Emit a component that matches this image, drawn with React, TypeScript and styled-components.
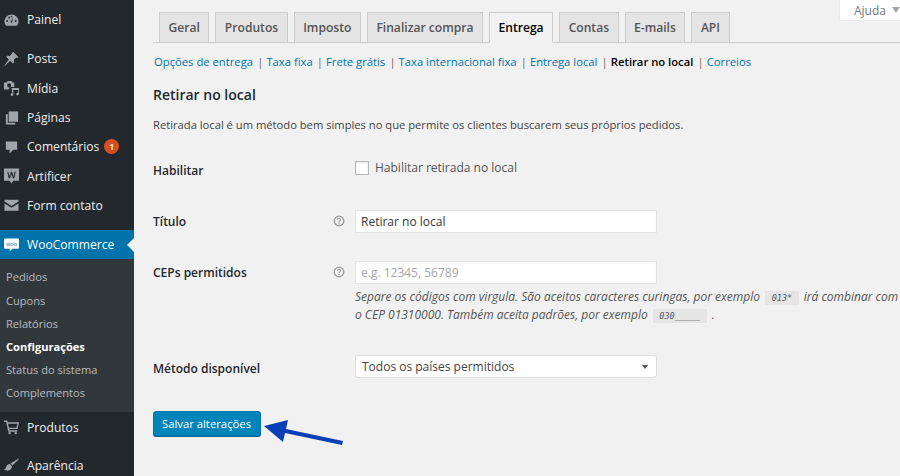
import styled, { createGlobalStyle } from "styled-components";

const GlobalStyle = createGlobalStyle`
  html, body {
    margin: 0;
    padding: 0;
    height: 100%;
    overflow: hidden;
    background: #f1f1f1;
  }
  * { box-sizing: border-box; }
`;

const Page = styled.div`
  display: flex;
  position: relative;
  width: 900px;
  height: 476px;
  overflow: hidden;
  background: #f1f1f1;
  font-family: "Open Sans", sans-serif;
  font-size: 12px;
  color: #444;
`;

/* sidebar */
const Sidebar = styled.nav`
  flex: 0 0 134px;
  height: 476px;
  padding-top: 5px;
  background: #23282d;
  overflow: hidden;
`;

const MenuItem = styled.div<{ $gap?: number; $active?: boolean }>`
  display: flex;
  align-items: center;
  position: relative;
  height: 29.3px;
  margin-top: ${(p) => p.$gap ?? 0}px;
  padding-left: 4px;
  gap: 4px;
  font-size: 12.1px;
  color: ${(p) => (p.$active ? "#fff" : "#eee")};
  background: ${(p) => (p.$active ? "#0073aa" : "transparent")};
`;

const IconBox = styled.span`
  display: flex;
  align-items: center;
  justify-content: center;
  width: 15px;
  height: 16px;
  margin-right: 4px;
`;

const Badge = styled.span`
  display: inline-flex;
  align-items: center;
  justify-content: center;
  width: 15px;
  height: 15px;
  margin-left: 1px;
  border-radius: 50%;
  background: #d54e21;
  color: #fff;
  font-size: 9px;
  font-weight: 600;
`;

const ActiveNotch = styled.span`
  position: absolute;
  right: 0;
  top: 8px;
  border: 7px solid transparent;
  border-left-width: 0;
  border-right-color: #f1f1f1;
`;

const Submenu = styled.div`
  display: flex;
  flex-direction: column;
  height: 153px;
  padding: 6px 0 8px 6px;
  background: #32373c;
`;

const SubItem = styled.div<{ $current?: boolean }>`
  flex: 1;
  display: flex;
  align-items: center;
  font-size: 11.1px;
  font-weight: ${(p) => (p.$current ? 700 : 400)};
  color: ${(p) => (p.$current ? "#fff" : "rgba(240,245,250,.7)")};
`;

/* main column */
const Main = styled.main`
  flex: 1;
  min-width: 0;
  padding: 12px 0 0 19px;
`;

const HelpTab = styled.div`
  position: absolute;
  top: 0;
  right: 0;
  display: flex;
  align-items: center;
  gap: 6px;
  width: 60px;
  height: 20px;
  padding-left: 14px;
  background: #fff;
  color: #72777c;
  font-size: 12px;
  box-shadow: 0 0 1px rgba(0, 0, 0, 0.15);
`;

const HelpCaret = styled.span`
  border: 4px solid transparent;
  border-top: 6px solid #a0a5aa;
  border-bottom-width: 0;
`;

const Tabs = styled.div`
  display: flex;
  gap: 6px;
  height: 31px;
  padding-left: 6px;
  border-bottom: 1px solid #ccc;
`;

const Tab = styled.div<{ $active?: boolean }>`
  height: ${(p) => (p.$active ? "31px" : "30px")};
  padding: 0 8.5px;
  border: 1px solid #ccc;
  border-bottom: ${(p) => (p.$active ? "1px solid #f1f1f1" : "none")};
  background: ${(p) => (p.$active ? "#f1f1f1" : "#e4e4e4")};
  color: ${(p) => (p.$active ? "#000" : "#555")};
  font-size: 12.1px;
  font-weight: 600;
  line-height: 29px;
  white-space: nowrap;
`;

const SubNav = styled.div`
  display: flex;
  height: 18px;
  margin-top: 10px;
  padding-left: 1px;
  font-size: 11.25px;
  line-height: 18px;
  white-space: nowrap;
  color: #666;
`;

const SubLink = styled.span<{ $current?: boolean }>`
  color: ${(p) => (p.$current ? "#000" : "#0073aa")};
  font-weight: ${(p) => (p.$current ? 600 : 400)};
`;

const Pipe = styled.span`
  margin: 0 3px 0 4.2px;
`;

const Title = styled.h3`
  margin: 14px 0 0;
  font-size: 14px;
  font-weight: 600;
  line-height: 20px;
  color: #23282d;
`;

const Intro = styled.p`
  margin: 11px 0 0;
  font-size: 11.2px;
  line-height: 18px;
  color: #444;
`;

const FormRow = styled.div<{ $height: number; $top?: number }>`
  display: grid;
  grid-template-columns: 178px 24px 1fr;
  height: ${(p) => p.$height}px;
  margin-top: ${(p) => p.$top ?? 0}px;
`;

const Label = styled.label<{ $drop?: number }>`
  padding-top: ${(p) => p.$drop ?? 0}px;
  font-size: 12px;
  font-weight: 600;
  line-height: 24px;
  color: #23282d;
`;

const HelpIcon = styled.span`
  display: flex;
  height: 21px;
  align-items: center;
  padding-left: 2px;
`;

const CheckRow = styled.div`
  display: flex;
  align-items: center;
  height: 23px;
  gap: 6px;
  font-size: 12px;
  color: #555;
`;

const Check = styled.input`
  appearance: none;
  width: 14px;
  height: 14px;
  margin: 0;
  border: 1px solid #b4b9be;
  background: #fff;
  box-shadow: inset 0 1px 2px rgba(0, 0, 0, 0.1);
`;

const TextInput = styled.input`
  display: block;
  width: 302px;
  height: 23px;
  padding: 0 5px;
  border: 1px solid #e4e4e4;
  background: #fff;
  font-family: inherit;
  font-size: 12px;
  color: #32373c;
  box-shadow: inset 0 1px 2px rgba(0, 0, 0, 0.03);
  &::placeholder { color: #a5a5a5; }
`;

const Description = styled.p`
  width: 545px;
  margin: 4px 0 0;
  font-size: 12px;
  font-style: italic;
  line-height: 17.5px;
  color: #555;
`;

const Code = styled.code`
  margin: 0 2px;
  padding: 2px 6.5px;
  background: #e5e5e5;
  font-family: "DejaVu Sans Mono", monospace;
  font-size: 8.5px;
  font-style: italic;
  line-height: 1;
  color: #555;
`;

const SelectBox = styled.div`
  position: relative;
  width: 302px;
  height: 23px;
  padding-left: 6px;
  border: 1px solid #ddd;
  border-radius: 3px;
  background: #fff;
  font-size: 12px;
  line-height: 22px;
  color: #444;
  &::after {
    content: "";
    position: absolute;
    right: 8px;
    top: 9px;
    border: 3px solid transparent;
    border-top: 4px solid #555;
    border-bottom-width: 0;
  }
`;

const SaveButton = styled.button`
  display: block;
  width: 108px;
  height: 25px;
  margin-top: 33px;
  padding: 0 1px 1px 0;
  border: 1px solid #0073aa;
  border-radius: 3px;
  background: #0085ba;
  box-shadow: 0 1px 0 #006799;
  color: #fff;
  font-family: inherit;
  font-size: 11.3px;
`;

const Arrow = styled.svg`
  position: absolute;
  left: 262px;
  top: 415px;
`;

const Icon = ({ children }: { children: React.ReactNode }) => (
  <IconBox>
    <svg width="16" height="16" viewBox="0 0 16 16" fill="#a0a5aa">
      {children}
    </svg>
  </IconBox>
);

function Question() {
  return (
    <svg width="12" height="12" viewBox="0 0 12 12" fill="none">
      <circle cx="6" cy="6" r="4.8" stroke="#999" strokeWidth="1.3" />
      <path d="M4.4 4.8c0-2 3.2-2 3.2-.1 0 1.2-1.600 1.100-1.600 2.500" stroke="#999" strokeWidth="1.100" />
      <rect x="5.400" y="8" width="1.200" height="1.200" fill="#999" />
    </svg>
  );
}

export default function App() {
  return (
    <Page>
      <GlobalStyle />
      <Sidebar>
        <MenuItem>
          <Icon>
            <path d="M8 2a7.500 7.500 0 0 0-7.500 7.500c0 2 .8 3.500 2 4.500h11c1.200-1 2-2.500 2-4.500A7.500 7.500 0 0 0 8 2z" />
            <path d="M9.500 5 7 10.500l1.600.6z" fill="#23282d" />
            <circle cx="3.500" cy="9" r="1" fill="#23282d" />
            <circle cx="12.500" cy="9" r="1" fill="#23282d" />
            <circle cx="5.500" cy="5.500" r="1" fill="#23282d" />
            <circle cx="8" cy="4.200" r=".8" fill="#23282d" />
          </Icon>
          Painel
        </MenuItem>
        <MenuItem $gap={10}>
          <Icon>
            <path d="M10 0.500 15.500 6l-1.500.8-1-.5-2.500 2.500.3 2.700-1.300 1.200L6.600 9.800 1 15.500l-.5-.3 4.700-6.600L2.300 5.700l1.200-1.300 2.700.3 2.500-2.500-.4-1z" />
          </Icon>
          Posts
        </MenuItem>
        <MenuItem>
          <Icon>
            <path d="M0 2h3l1-1.500h4L9 2h2v5H8.500a3 3 0 0 0-3.500 2.500H0zM5.500 3a2.200 2.200 0 1 0 0 4.400 2.200 2.200 0 0 0 0-4.400z" />
            <path d="M8 8h8v6.500a1.500 1.500 0 1 1-1.500-1.500l.5.100V10h-5v5a1.500 1.500 0 1 1-1.500-1.500l.5.100z" />
          </Icon>
          Mídia
        </MenuItem>
        <MenuItem>
          <Icon>
            <path d="M5 1h10v11H5z" />
            <path d="M2 4h2v9h8v2H2z" />
          </Icon>
          Páginas
        </MenuItem>
        <MenuItem>
          <Icon>
            <path d="M2 2h12v9h-4l-4 4v-4H2z" />
          </Icon>
          Comentários
          <Badge>1</Badge>
        </MenuItem>
        <MenuItem>
          <Icon>
            <path d="M0 0h16v13h-6l-2 3-2-3H0z" />
            <path d="m3.500 3.500 1.200 0 1.100 5L7.300 3.500h1.400l1.500 5 1.100-5 1.200 0L11 10.500H9.500L8 5.800 6.500 10.500H5z" fill="#23282d" />
          </Icon>
          Artificer
        </MenuItem>
        <MenuItem>
          <Icon>
            <path d="M0.500 2.500h15v1.800L8 9 .5 4.300z" />
            <path d="M.5 6.300 8 11l7.500-4.700V14H.5z" />
          </Icon>
          Form contato
        </MenuItem>
        <MenuItem $gap={10} $active>
          <IconBox>
            <svg width="16" height="16" viewBox="0 0 16 16">
              <path d="M1 1h14a1 1 0 0 1 1 1v9a1 1 0 0 1-1 1h-6l-3 3v-3H1a1 1 0 0 1-1-1V2a1 1 0 0 1 1-1z" fill="#fff" />
              <text x="8" y="9" fontSize="6" fontFamily="Open Sans, sans-serif" fill="#0073aa" textAnchor="middle">
                woo
              </text>
            </svg>
          </IconBox>
          WooCommerce
          <ActiveNotch />
        </MenuItem>
        <Submenu>
          <SubItem>Pedidos</SubItem>
          <SubItem>Cupons</SubItem>
          <SubItem>Relatórios</SubItem>
          <SubItem $current>Configurações</SubItem>
          <SubItem>Status do sistema</SubItem>
          <SubItem>Complementos</SubItem>
        </Submenu>
        <MenuItem>
          <Icon>
            <path d="M0 1h3.500l.5 2H16l-1.500 7H5.500l.3 1.500H14V13H4.500L2.300 2.600H0zM4.300 4.500 5.200 8.800h8.100l.9-4.300z" />
            <circle cx="6" cy="14.500" r="1.300" />
            <circle cx="12.500" cy="14.500" r="1.300" />
          </Icon>
          Produtos
        </MenuItem>
        <MenuItem $gap={9}>
          <Icon>
            <path d="M15.500 1 16 1.500 9 8.500 7 6.500z" />
            <path d="M6.200 7 8.500 9.400c0 2.500-2 4.600-4.500 4.600-1.500 0-2.800-.4-4-1.500 1.500 0 2-.8 2.200-2C2.500 8.500 4 7 6.200 7z" />
          </Icon>
          Aparência
        </MenuItem>
      </Sidebar>

      <Main>
        <Tabs>
          <Tab>Geral</Tab>
          <Tab>Produtos</Tab>
          <Tab>Imposto</Tab>
          <Tab>Finalizar compra</Tab>
          <Tab $active>Entrega</Tab>
          <Tab>Contas</Tab>
          <Tab>E-mails</Tab>
          <Tab>API</Tab>
        </Tabs>
        <SubNav>
          <SubLink>Opções de entrega</SubLink>
          <Pipe>|</Pipe>
          <SubLink>Taxa fixa</SubLink>
          <Pipe>|</Pipe>
          <SubLink>Frete grátis</SubLink>
          <Pipe>|</Pipe>
          <SubLink>Taxa internacional fixa</SubLink>
          <Pipe>|</Pipe>
          <SubLink>Entrega local</SubLink>
          <Pipe>|</Pipe>
          <SubLink $current>Retirar no local</SubLink>
          <Pipe>|</Pipe>
          <SubLink>Correios</SubLink>
        </SubNav>
        <Title>Retirar no local</Title>
        <Intro>Retirada local é um método bem simples no que permite os clientes buscarem seus próprios pedidos.</Intro>

        <FormRow $height={54} $top={22}>
          <Label $drop={3}>Habilitar</Label>
          <span />
          <CheckRow>
            <Check type="checkbox" />
            Habilitar retirada no local
          </CheckRow>
        </FormRow>
        <FormRow $height={51}>
          <Label>Título</Label>
          <HelpIcon>
            <Question />
          </HelpIcon>
          <TextInput defaultValue="Retirar no local" />
        </FormRow>
        <FormRow $height={94}>
          <Label>CEPs permitidos</Label>
          <HelpIcon>
            <Question />
          </HelpIcon>
          <div>
            <TextInput placeholder="e.g. 12345, 56789" />
            <Description>
              Separe os códigos com virgula. São aceitos caracteres curingas, por exemplo <Code>013*</Code> irá combinar
              com o CEP 01310000. Também aceita padrões, por exemplo <Code>030_____</Code> .
            </Description>
          </div>
        </FormRow>
        <FormRow $height={23}>
          <Label $drop={2}>Método disponível</Label>
          <span />
          <SelectBox>Todos os países permitidos</SelectBox>
        </FormRow>
        <SaveButton>Salvar alterações</SaveButton>
      </Main>

      <HelpTab>
        Ajuda
        <HelpCaret />
      </HelpTab>
      <Arrow width="84" height="34" viewBox="0 0 84 34">
        <path d="M2 11 26 5 24 14 81 26 80 30 23 18 21 27z" fill="#0a3fb5" />
      </Arrow>
    </Page>
  );
}
